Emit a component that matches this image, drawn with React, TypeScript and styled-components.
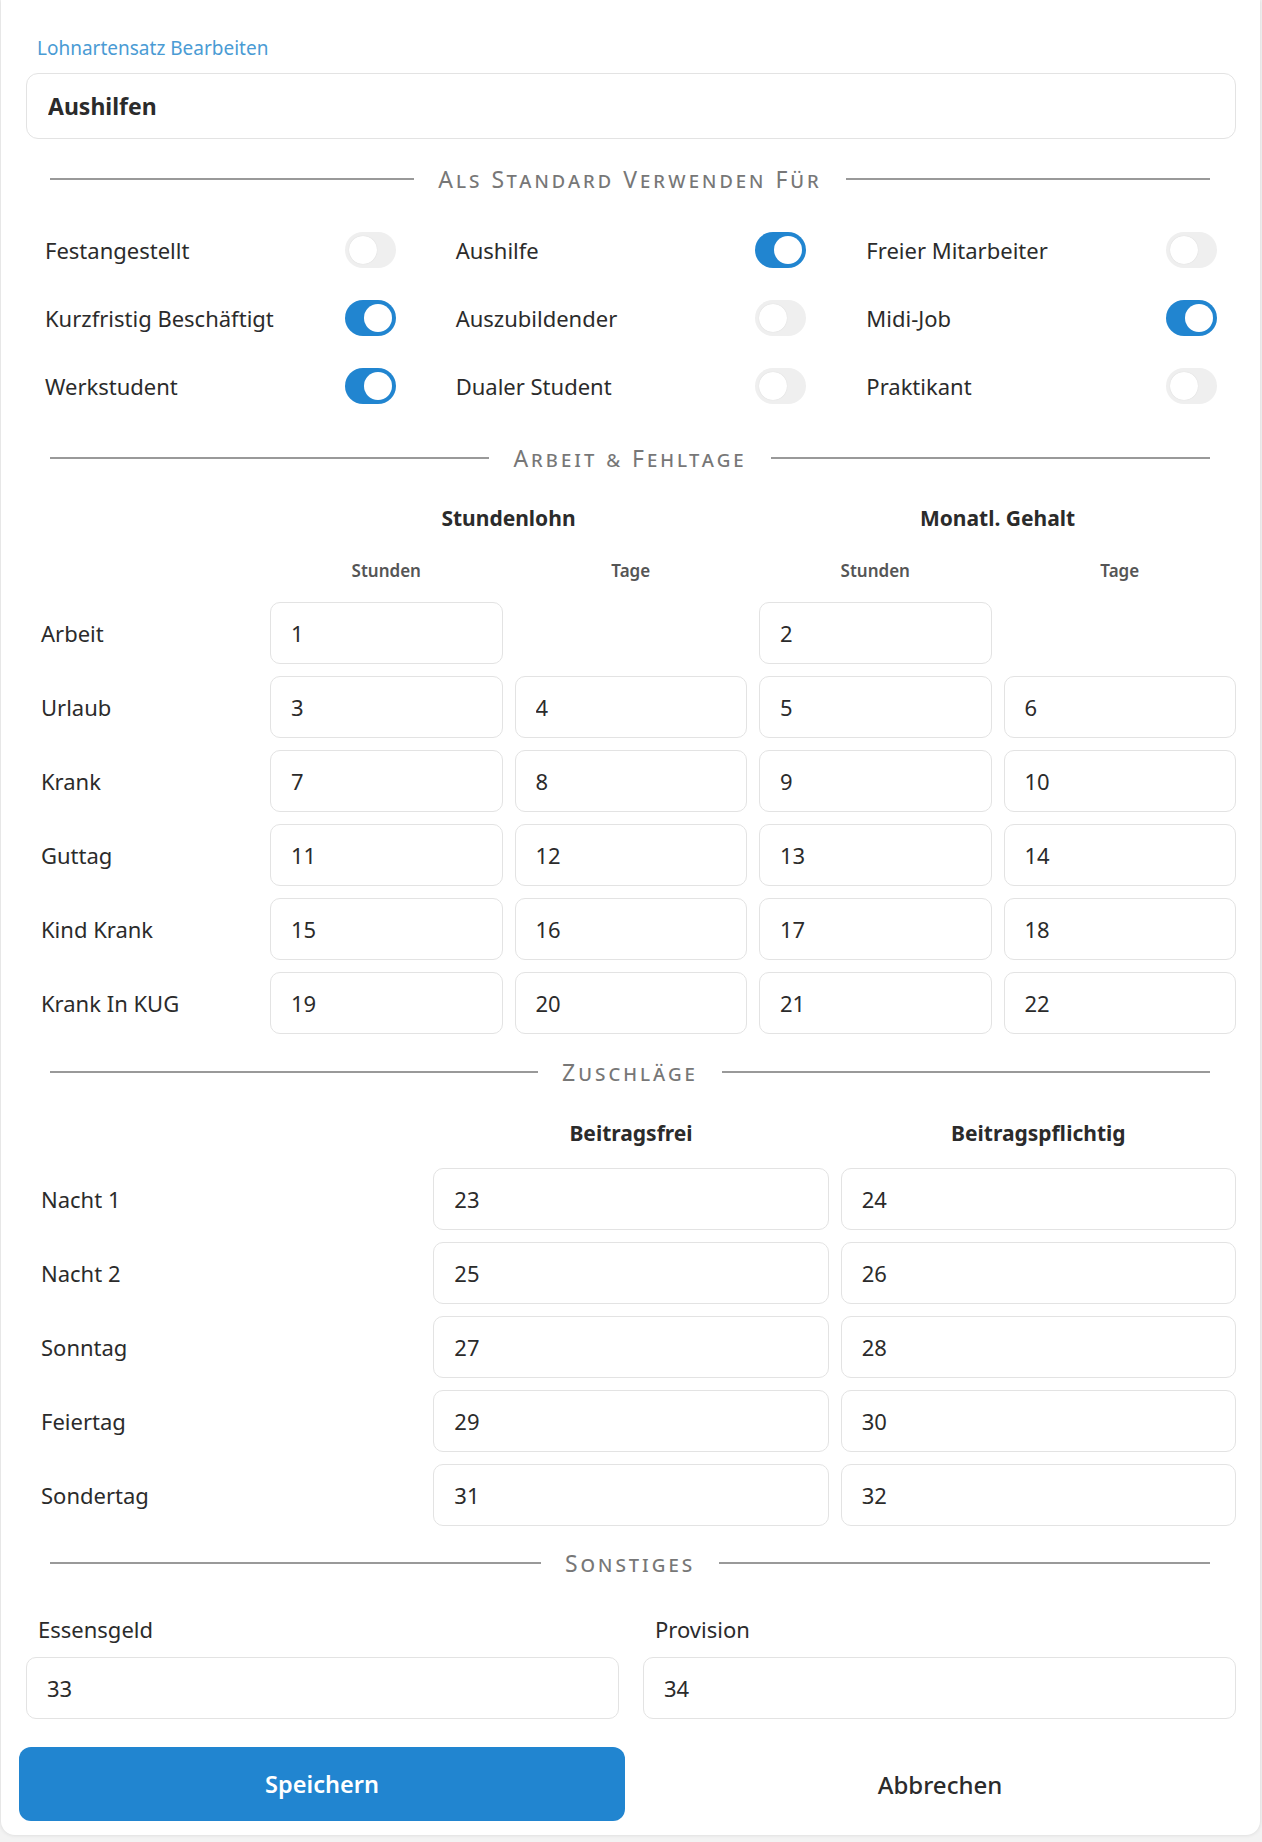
import React from "react";
import styled, { createGlobalStyle } from "styled-components";

const GlobalStyle = createGlobalStyle`
  body {
    margin: 0;
    background: #f3f3f3;
    font-family: "Noto Sans", "Open Sans", sans-serif;
    color: #333;
  }
`;

const Card = styled.div`
  margin: 0 2px 6px 1px;
  padding: 36px 24px 14px 25px;
  background: #fff;
  border-radius: 0 0 14px 14px;
  box-shadow: 0 0 4px rgba(0, 0, 0, 0.12);
`;

const Title = styled.div`
  font-size: 19px;
  line-height: 24px;
  color: #4a9bd4;
  padding-left: 11px;
`;

const NameInput = styled.input`
  display: block;
  box-sizing: border-box;
  width: 100%;
  height: 66px;
  margin-top: 13px;
  padding: 0 21px;
  border: 1px solid #e3e3e3;
  border-radius: 12px;
  font-family: inherit;
  font-size: 23px;
  font-weight: 700;
  color: #2b2b2b;
  outline: none;
`;

const Divider = styled.div<{ $mt: number }>`
  display: flex;
  align-items: center;
  gap: 24px;
  height: 30px;
  margin: ${(p) => p.$mt}px 26px 0 24px;

  &::before,
  &::after {
    content: "";
    flex: 1;
    height: 2px;
    background: #999;
  }
`;

const DividerText = styled.span`
  font-size: 23px;
  font-variant: small-caps;
  letter-spacing: 3px;
  color: #777;
  white-space: nowrap;
`;

const ToggleGrid = styled.div`
  display: grid;
  grid-template-columns: repeat(3, 1fr);
  column-gap: 60px;
  row-gap: 32px;
  margin-top: 38px;
  padding: 0 19px;
`;

const ToggleRow = styled.label`
  display: flex;
  align-items: center;
  justify-content: space-between;
  height: 36px;
  font-size: 22px;
  color: #2b2b2b;
`;

const Switch = styled.span<{ $on: boolean }>`
  position: relative;
  width: 51px;
  height: 36px;
  border-radius: 18px;
  background: ${(p) => (p.$on ? "#2185d0" : "#efefef")};

  &::after {
    content: "";
    position: absolute;
    top: 4px;
    left: ${(p) => (p.$on ? "19px" : "4px")};
    width: 28px;
    height: 28px;
    border-radius: 50%;
    background: #fff;
    box-shadow: ${(p) => (p.$on ? "none" : "0 0 1px rgba(0,0,0,0.15)")};
  }
`;

const Grid = styled.div<{ $cols: string; $mt: number }>`
  display: grid;
  grid-template-columns: ${(p) => p.$cols};
  column-gap: 12px;
  row-gap: 12px;
  margin-top: ${(p) => p.$mt}px;
  align-items: center;
`;

const GroupHead = styled.div<{ $span?: number }>`
  grid-column: span ${(p) => p.$span || 1};
  text-align: center;
  font-size: 21px;
  font-weight: 700;
  line-height: 28px;
  color: #2b2b2b;
`;

const SubHead = styled.div`
  text-align: center;
  font-size: 17px;
  font-weight: 600;
  line-height: 24px;
  color: #555;
`;

const RowLabel = styled.div`
  padding-left: 15px;
  font-size: 22px;
  color: #2b2b2b;
`;

const Field = styled.input`
  box-sizing: border-box;
  width: 100%;
  min-width: 0;
  height: 62px;
  padding: 0 20px;
  border: 1px solid #e3e3e3;
  border-radius: 10px;
  font-family: inherit;
  font-size: 22px;
  color: #2b2b2b;
  outline: none;
`;

const Other = styled.div`
  display: grid;
  grid-template-columns: 1fr 1fr;
  column-gap: 24px;
  margin-top: 38px;
`;

const OtherLabel = styled.div`
  padding-left: 12px;
  margin-bottom: 15px;
  font-size: 22px;
  line-height: 26px;
  color: #2b2b2b;
`;

const Buttons = styled.div`
  display: grid;
  grid-template-columns: 1fr 1fr;
  column-gap: 12px;
  margin: 28px -7px 0 -7px;
`;

const Button = styled.button<{ $primary?: boolean }>`
  height: 74px;
  border: none;
  border-radius: 12px;
  background: ${(p) => (p.$primary ? "#2185d0" : "transparent")};
  color: ${(p) => (p.$primary ? "#fff" : "#2b2b2b")};
  font-family: inherit;
  font-size: ${(p) => (p.$primary ? "23.5px" : "24px")};
  font-weight: ${(p) => (p.$primary ? 600 : 500)};
  cursor: pointer;
`;

const toggles: [string, boolean][] = [
  ["Festangestellt", false],
  ["Aushilfe", true],
  ["Freier Mitarbeiter", false],
  ["Kurzfristig Beschäftigt", true],
  ["Auszubildender", false],
  ["Midi-Job", true],
  ["Werkstudent", true],
  ["Dualer Student", false],
  ["Praktikant", false],
];

// null = no field in that cell
const absences: [string, (number | null)[]][] = [
  ["Arbeit", [1, null, 2, null]],
  ["Urlaub", [3, 4, 5, 6]],
  ["Krank", [7, 8, 9, 10]],
  ["Guttag", [11, 12, 13, 14]],
  ["Kind Krank", [15, 16, 17, 18]],
  ["Krank In KUG", [19, 20, 21, 22]],
];

const surcharges: [string, number, number][] = [
  ["Nacht 1", 23, 24],
  ["Nacht 2", 25, 26],
  ["Sonntag", 27, 28],
  ["Feiertag", 29, 30],
  ["Sondertag", 31, 32],
];

const MATRIX = "232px repeat(4, 1fr)";

const App = () => {
  return (
    <>
      <GlobalStyle />
      <Card>
        <Title>Lohnartensatz Bearbeiten</Title>
        <NameInput defaultValue="Aushilfen" />

        <Divider $mt={25}>
          <DividerText>Als Standard Verwenden Für</DividerText>
        </Divider>

        <ToggleGrid>
          {toggles.map(([label, on]) => (
            <ToggleRow key={label}>
              {label}
              <Switch $on={on} />
            </ToggleRow>
          ))}
        </ToggleGrid>

        <Divider $mt={39}>
          <DividerText>Arbeit &amp; Fehltage</DividerText>
        </Divider>

        <Grid $cols={MATRIX} $mt={31}>
          <div />
          <GroupHead $span={2}>Stundenlohn</GroupHead>
          <GroupHead $span={2}>Monatl. Gehalt</GroupHead>
        </Grid>
        <Grid $cols={MATRIX} $mt={27}>
          <div />
          <SubHead>Stunden</SubHead>
          <SubHead>Tage</SubHead>
          <SubHead>Stunden</SubHead>
          <SubHead>Tage</SubHead>
        </Grid>
        <Grid $cols={MATRIX} $mt={19}>
          {absences.map(([label, values]) => (
            <React.Fragment key={label}>
              <RowLabel>{label}</RowLabel>
              {values.map((v, i) =>
                v === null ? <div key={i} /> : <Field key={i} defaultValue={v} />
              )}
            </React.Fragment>
          ))}
        </Grid>

        <Divider $mt={23}>
          <DividerText>Zuschläge</DividerText>
        </Divider>

        <Grid $cols="repeat(3, 1fr)" $mt={32}>
          <div />
          <GroupHead>Beitragsfrei</GroupHead>
          <GroupHead>Beitragspflichtig</GroupHead>
        </Grid>
        <Grid $cols="repeat(3, 1fr)" $mt={21}>
          {surcharges.map(([label, free, paid]) => (
            <React.Fragment key={label}>
              <RowLabel>{label}</RowLabel>
              <Field defaultValue={free} />
              <Field defaultValue={paid} />
            </React.Fragment>
          ))}
        </Grid>

        <Divider $mt={22}>
          <DividerText>Sonstiges</DividerText>
        </Divider>

        <Other>
          <div>
            <OtherLabel>Essensgeld</OtherLabel>
            <Field defaultValue={33} />
          </div>
          <div>
            <OtherLabel>Provision</OtherLabel>
            <Field defaultValue={34} />
          </div>
        </Other>

        <Buttons>
          <Button $primary>Speichern</Button>
          <Button>Abbrechen</Button>
        </Buttons>
      </Card>
    </>
  );
};

export default App;
